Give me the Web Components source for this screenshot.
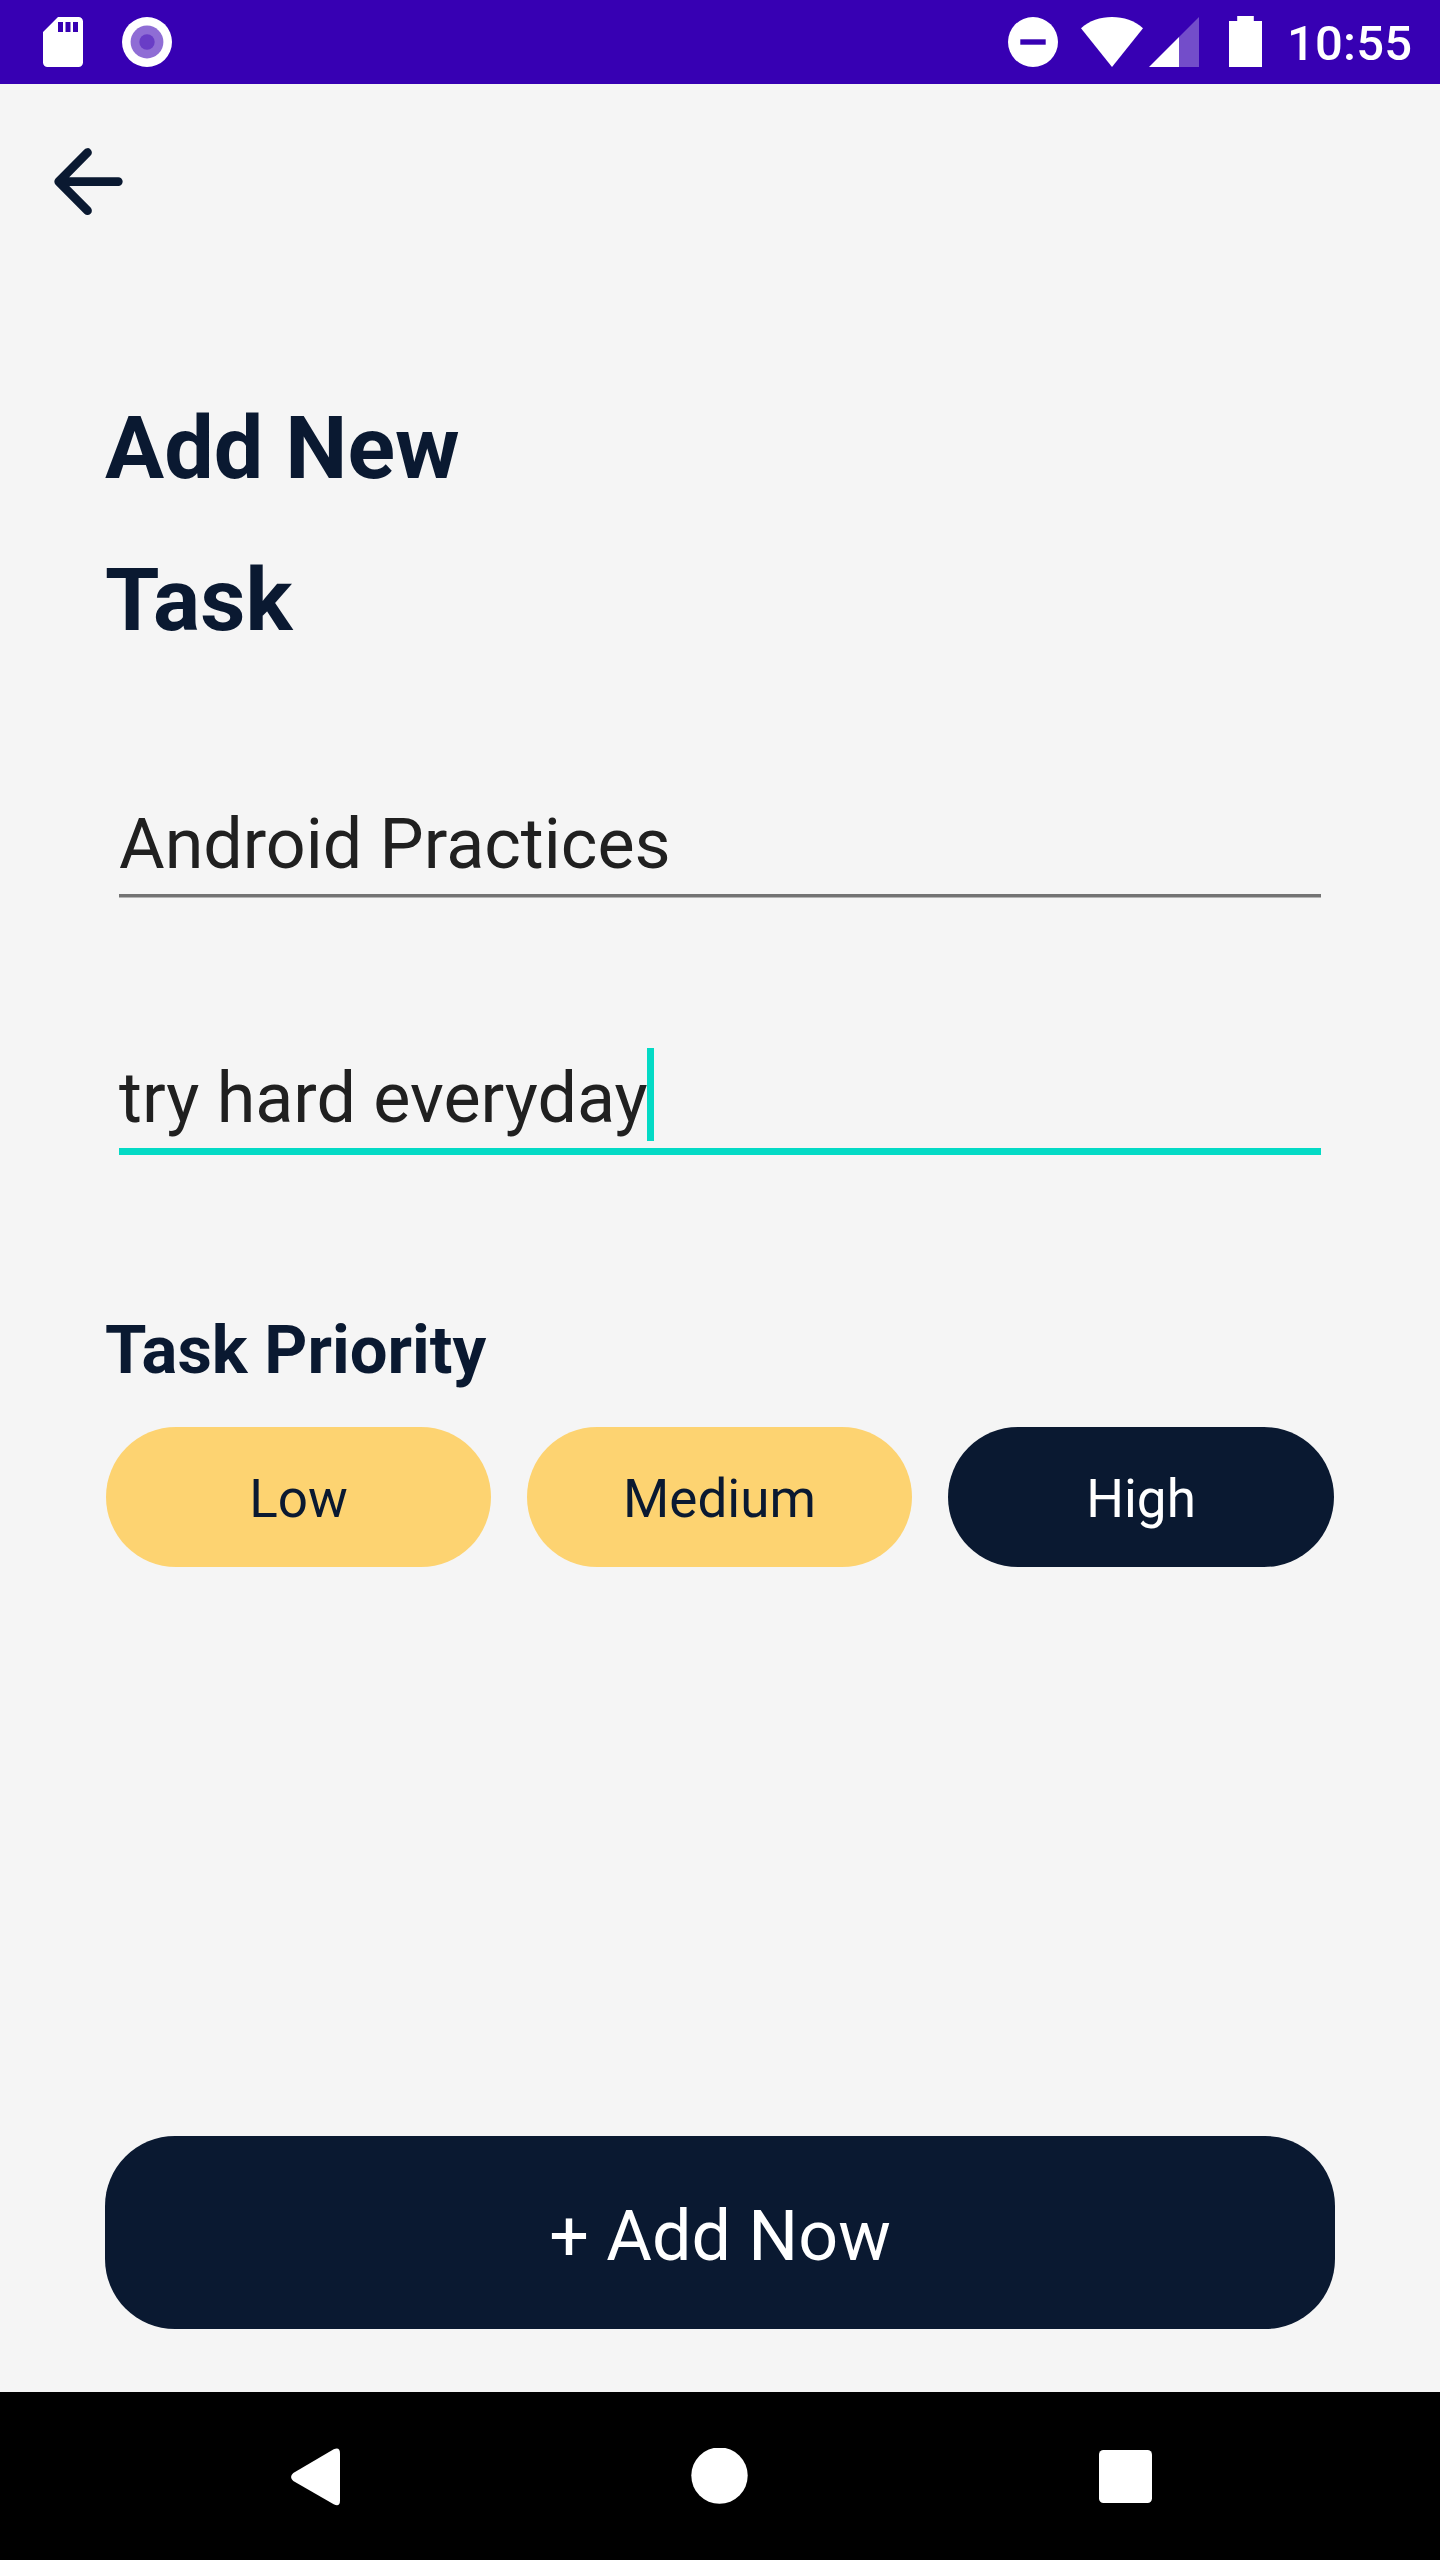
<!DOCTYPE html>
<html lang="en">
<head>
<meta charset="utf-8">
<title>Add New Task</title>
<style>
html,body{margin:0;padding:0;background:#f5f5f5}
body{font-family:Roboto,sans-serif;width:1440px;height:2560px;overflow:hidden}
</style>
</head>
<body>
<task-screen></task-screen>
<script>
const define = (name, css, html) => {
  const tpl = document.createElement('template');
  tpl.innerHTML = `<style>*{box-sizing:border-box}${css}</style>${html}`;
  customElements.define(name, class extends HTMLElement {
    constructor() {
      super();
      this.attachShadow({ mode: 'open' }).appendChild(tpl.content.cloneNode(true));
    }
  });
};

define('status-bar', `
  :host{display:flex;justify-content:space-between;height:84px;background:#3700b3;color:#fff;padding:0 0 0 43px}
  div{display:flex;align-items:flex-start}
  svg{display:block;margin-top:16px;flex:none}
  .sd{margin-right:39px}
  .dnd{margin-right:23px}
  .wifi{margin-right:6px}
  .cell{margin-right:30px}
  .bat{margin-right:25px}
  time{width:153px;font-weight:500;font-size:49px;letter-spacing:.2px;line-height:84px;height:84px;padding-top:2px;white-space:nowrap}
`, `
  <div>
    <svg class="sd" width="40" height="52" viewBox="0 0 40 52" fill="#fff"><path fill-rule="evenodd" d="M15 1H35.500a4.500 4.500 0 0 1 4.500 4.500V46.500a4.500 4.500 0 0 1-4.500 4.500H4.500a4.500 4.500 0 0 1-4.500-4.500V16ZM15 6v10h5V6ZM22.500 6v10h5V6ZM30 6v10h5V6Z"/></svg>
    <svg width="50" height="52" viewBox="0 0 50 52" fill="#fff"><circle cx="25" cy="26" r="25"/><circle cx="25" cy="26" r="16.400" fill="#8f6dd5"/><circle cx="25" cy="26" r="7.700" fill="#693dc6"/></svg>
  </div>
  <div>
    <svg class="dnd" width="50" height="52" viewBox="0 0 50 52"><circle cx="25" cy="26" r="25" fill="#fff"/><path d="M12.300 23.300h25.400v5.400H12.300z" fill="#3700b3"/></svg>
    <svg class="wifi" width="62" height="52" viewBox="0 0 62 52" fill="#fff"><path d="M0 12.300C8.500 4.600 19.200 1 31 1s22.500 3.600 31 11.300L31 51Z"/></svg>
    <svg class="cell" width="50" height="52" viewBox="0 0 50 52" fill="#fff"><path opacity=".3" d="M50 1V51H30V21Z"/><path d="M30 21V51H0Z"/></svg>
    <svg class="bat" width="33" height="52" viewBox="0 0 33 52" fill="#fff"><path d="M8.200 0h16.600v5H33v46H0V5h8.200Z"/></svg>
    <time>10:55</time>
  </div>
`);

define('back-button', `
  :host{display:block;width:80px;height:80px}
  svg{display:block}
`, `<svg width="80" height="80" viewBox="0 0 80 80" fill="none" stroke="#0a1931" stroke-width="8.750" stroke-linecap="round" stroke-linejoin="round"><path d="M39.500 10.500 10.700 39.600 39.500 68.700M10.700 39.600H70.300"/></svg>`);

define('page-title', `
  :host{display:block;font-weight:700;font-size:88px;letter-spacing:.05px;line-height:152px;color:#0a1931}
`, `<slot></slot>`);

define('text-field', `
  :host{display:flex;align-items:flex-start;height:98px;margin:0 14px;padding-top:3px;background:linear-gradient(#737373 0 3px,#b4b4b4 3px) bottom/100% 4px no-repeat;font-size:70px;color:#202020}
  span{line-height:82px;height:82px;white-space:nowrap}
  i{display:none;width:7px;height:93px;background:#03dac5;margin:-9px 0 0 -1px}
  :host([focused]){height:107px;padding-top:9px;background:linear-gradient(#03dac5 0 0) bottom/100% 7px no-repeat}
  :host([focused]) i{display:block}
`, `<span><slot></slot></span><i></i>`);

define('section-label', `
  :host{display:block;font-weight:700;font-size:67px;line-height:78px;color:#0a1931}
`, `<slot></slot>`);

define('priority-chip', `
  :host{display:flex;align-items:center;justify-content:center;flex:0 0 385px;height:140px;padding-top:4px;border-radius:70px;background:#fdd371;color:#0a1931;font-size:53px;line-height:62px}
  :host(:last-child){flex-grow:1}
  :host([selected]){background:#0a1931;color:#fff}
`, `<slot></slot>`);

define('primary-button', `
  :host{display:flex;align-items:center;justify-content:center;height:193px;padding-top:7px;border-radius:70px;background:#0a1931;color:#fff;font-size:70px;line-height:82px}
`, `<slot></slot>`);

define('navigation-bar', `
  :host{display:flex;align-items:flex-start;gap:351px;height:168px;padding:56px 0 0 291px;background:#000}
  svg{display:block;flex:none}
`, `
  <svg width="49" height="58" viewBox="0 0 49 58" fill="#fff"><path d="M42.700 1.200Q49 -1.600 49 5.500V52.500Q49 59.400 42.700 56.300L2.300 33Q-2.200 29 2.300 25Z"/></svg>
  <svg width="57" height="58" viewBox="0 0 57 58" fill="#fff"><circle cx="28.500" cy="27.600" r="28.200"/></svg>
  <svg width="53" height="58" viewBox="0 0 53 58" fill="#fff"><rect y="2" width="53" height="53" rx="4.500"/></svg>
`);

define('task-screen', `
  :host{display:flex;flex-direction:column;width:1440px;height:2560px;background:#f5f5f5}
  back-button{margin:58px 0 0 48px}
  main{flex:1;display:flex;flex-direction:column;padding:150px 105px 63px}
  .first{margin-top:124px}
  .second{margin-top:150px}
  section-label{margin-top:156px}
  .chips{display:flex;gap:36px;margin-top:38px;padding:0 1px}
  primary-button{margin-top:auto}
`, `
  <status-bar></status-bar>
  <back-button></back-button>
  <main>
    <page-title>Add New<br>Task</page-title>
    <text-field class="first">Android Practices</text-field>
    <text-field class="second" focused>try hard everyday</text-field>
    <section-label>Task Priority</section-label>
    <div class="chips">
      <priority-chip>Low</priority-chip>
      <priority-chip>Medium</priority-chip>
      <priority-chip selected>High</priority-chip>
    </div>
    <primary-button>+ Add Now</primary-button>
  </main>
  <navigation-bar></navigation-bar>
`);
</script>
</body>
</html>
